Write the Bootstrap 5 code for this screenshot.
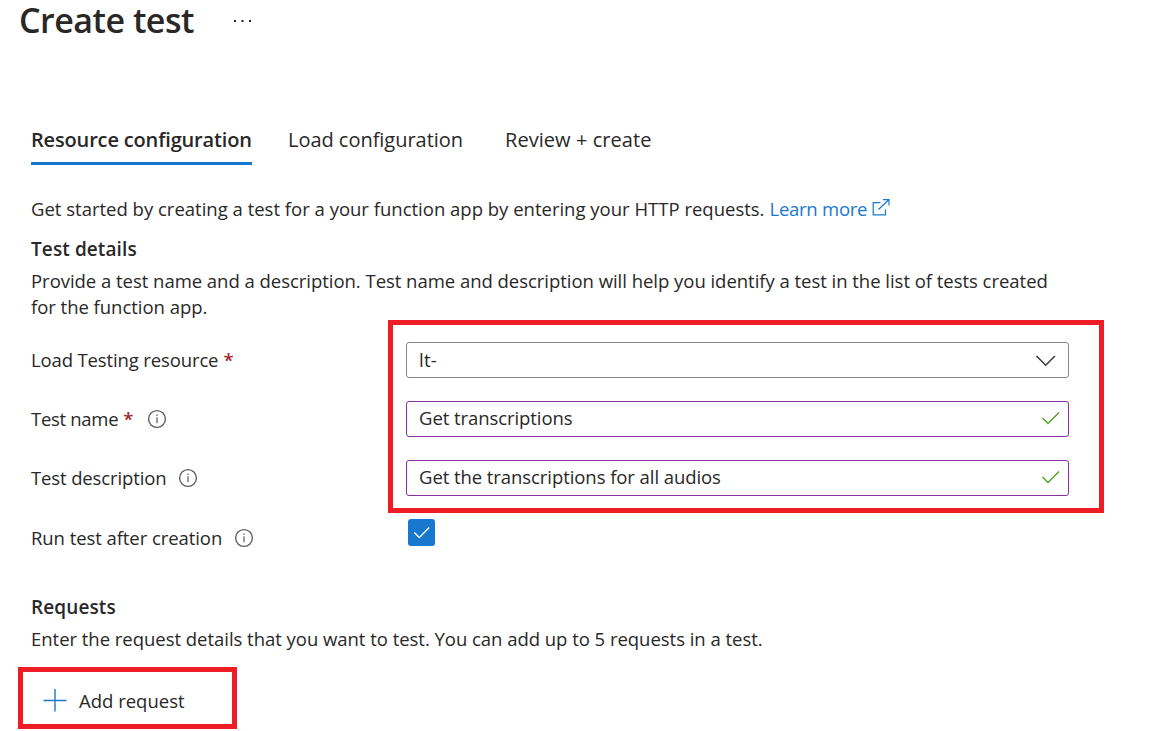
<!DOCTYPE html>
<html lang="en">
<head>
<meta charset="utf-8">
<meta name="viewport" content="width=device-width, initial-scale=1">
<title>Create test</title>
<link href="https://cdn.jsdelivr.net/npm/bootstrap@5.3.0/dist/css/bootstrap.min.css" rel="stylesheet">
<style>
body{font-family:"Open Sans","Noto Sans",sans-serif;font-size:18.5px;line-height:26px;letter-spacing:-.03px;color:#292827;background:#fff}
svg{display:block;flex:none}
.page-body{padding-left:31px}
.page-title{font-size:34px;font-weight:600;line-height:40px;letter-spacing:-.5px;padding-left:19px}
.more-btn{margin:2px 0 0 40px;color:#292827}
.test-tabs{margin-top:87px;gap:36px;font-size:20px}
.test-tabs .nav-link{color:#292827;padding:0 0 9px;border-bottom:3px solid transparent}
.test-tabs .nav-link:last-child{margin-left:6px;letter-spacing:.05px}
.test-tabs .nav-link.active{font-weight:600;letter-spacing:-.16px;width:221px;white-space:nowrap;border-color:#1878d0}
.intro{margin-top:31px;letter-spacing:0}
.intro a{color:#1878d0;margin-left:5px;letter-spacing:-.25px}
.intro svg{margin:3px 0 0 5px}
.section-title{font-size:19px;font-weight:600;line-height:26px;letter-spacing:.1px}
.labels{width:357px;padding-top:27px;letter-spacing:-.13px}
.labels label{height:26px;margin-bottom:33px}
.labels label:nth-child(3){margin-bottom:34px}
.labels label:nth-child(2){letter-spacing:-.3px}
.labels label:nth-child(4){letter-spacing:-.07px}
.labels .info{margin-left:12px}
.labels .req + .info{margin-left:14px}
.req{color:#a4262c;margin-left:5px;font-weight:600}
.marked{border:5px solid #ee1c25}
.fields{width:716px;height:193px;padding:17px 30px 0 13px;gap:23px}
.field{height:36px;border:1px solid #8a8886;border-radius:3px;padding:0 7px 2px 12px}
.field.picker{padding:0 8px 0 12px}
.field.valid{border-color:#8a2da5}
.field input{border:0;outline:0;padding:0;background:none;color:inherit;letter-spacing:-.07px}
.field.picker input{letter-spacing:.3px}
.check-box{width:27px;height:27px;background:#1878d0;border-radius:3px;margin:6px 0 0 20px}
.add-req{width:219px;height:62px;margin:15px 0 0 -13px;padding:5px 0 0 20px;background:#fff;text-align:left;gap:12px;color:#292827}
</style>
</head>
<body>
<svg width="0" height="0" class="position-absolute">
  <symbol id="info" viewBox="0 0 20 20"><circle cx="10" cy="10" r="8.4" fill="none" stroke="#605e5c" stroke-width="1.4"/><path d="M10 8.2v6M10 5.4v1.5" stroke="#605e5c" stroke-width="1.2"/></symbol>
  <symbol id="tick" viewBox="0 0 20 16"><path d="M1.5 8 7 13.500 18 2.500" fill="none" stroke="currentColor" stroke-width="1.5"/></symbol>
</svg>
<header class="d-flex align-items-center">
  <h1 class="page-title mb-0">Create test</h1>
  <button class="btn p-0 border-0 more-btn" aria-label="More"><svg width="18" height="4" fill="#292827"><path d="M0 1h2v2H0zM7.500 1h2v2h-2zM15 1h2v2h-2z"/></svg></button>
</header>
<main class="page-body">
  <nav class="nav test-tabs">
    <a class="nav-link active" href="#">Resource configuration</a>
    <a class="nav-link" href="#">Load configuration</a>
    <a class="nav-link" href="#">Review + create</a>
  </nav>
  <p class="intro d-flex mb-0">Get started by creating a test for a your function app by entering your HTTP requests.
    <a href="#" class="d-flex text-decoration-none">Learn more
      <svg width="20" height="18" fill="none" stroke="currentColor" stroke-width="1.2"><path d="M8.500 3.700H1.200V15.900H13.500V10.500M6.500 10.500 16.500 1M11 .700H17V6.500"/></svg></a></p>
  <h2 class="section-title mb-0" style="margin-top:14px">Test details</h2>
  <p class="mb-0" style="margin-top:6px">Provide a test name and a description. Test name and description will help you identify a test in the list of tests created<br>for the function app.</p>
  <form class="d-flex">
    <div class="labels d-flex flex-column">
      <label class="d-flex align-items-center" for="res">Load Testing resource<span class="req">*</span></label>
      <label class="d-flex align-items-center" for="tname">Test name<span class="req">*</span><svg class="info" width="20" height="20"><use href="#info"/></svg></label>
      <label class="d-flex align-items-center" for="desc">Test description<svg class="info" width="20" height="20"><use href="#info"/></svg></label>
      <label class="d-flex align-items-center">Run test after creation<svg class="info" width="20" height="20"><use href="#info"/></svg></label>
    </div>
    <div>
      <div class="fields marked d-flex flex-column">
        <div class="field picker d-flex align-items-center"><input id="res" class="flex-grow-1" value="lt-"><svg width="28" height="16" viewBox="0 0 28 16"><path d="M4.500 4 13.700 13.200 22.900 4" fill="none" stroke="#3b3a39" stroke-width="1.5"/></svg></div>
        <div class="field valid d-flex align-items-center"><input id="tname" class="flex-grow-1" value="Get transcriptions"><svg width="20" height="16" color="#57a32b"><use href="#tick"/></svg></div>
        <div class="field valid d-flex align-items-center"><input id="desc" class="flex-grow-1" value="Get the transcriptions for all audios"><svg width="20" height="16" color="#57a32b"><use href="#tick"/></svg></div>
      </div>
      <div class="check-box d-flex align-items-center justify-content-center"><svg width="18" height="15" color="#fff"><use href="#tick"/></svg></div>
    </div>
  </form>
  <h2 class="section-title mb-0" style="margin-top:10px">Requests</h2>
  <p class="mb-0" style="margin-top:6px">Enter the request details that you want to test. You can add up to 5 requests in a test.</p>
  <button class="add-req marked d-flex align-items-center"><svg width="24" height="24" stroke="#1878d0" stroke-width="1.4"><path d="M12 0v22.500M.500 11.500h23"/></svg><span>Add request</span></button>
</main>
<script src="https://cdn.jsdelivr.net/npm/bootstrap@5.3.0/dist/js/bootstrap.bundle.min.js"></script>
</body>
</html>
